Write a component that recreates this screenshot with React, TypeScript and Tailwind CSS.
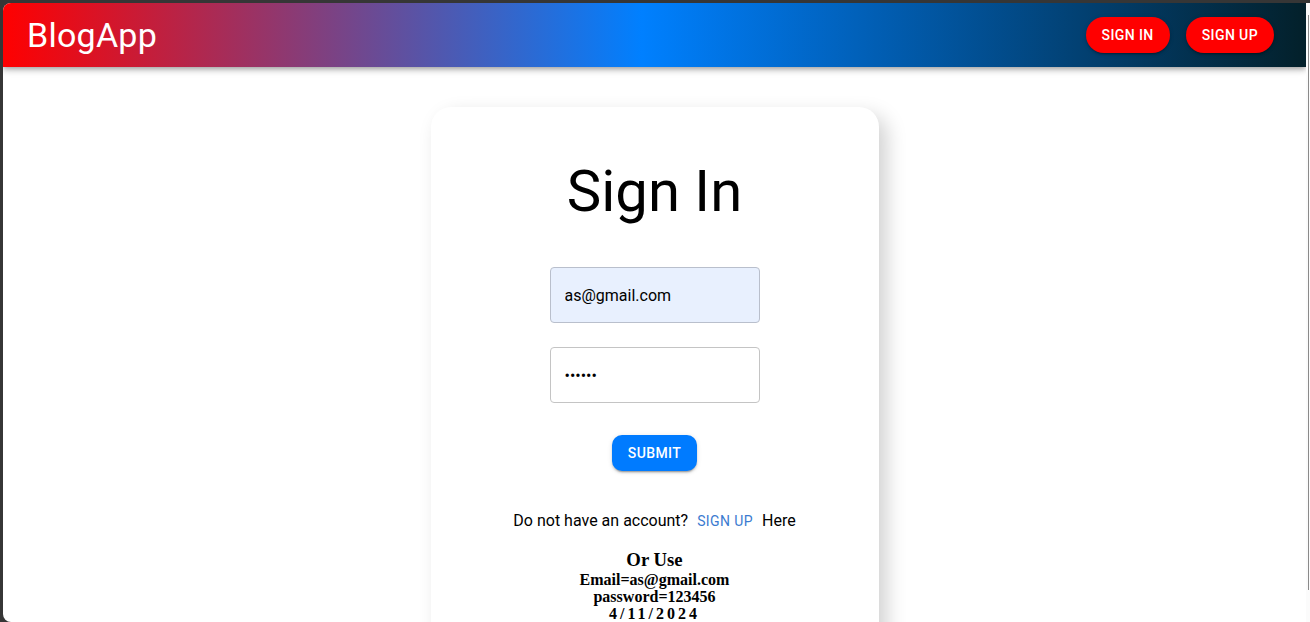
import React from "react";

export default function App() {
  return (
    <div
      className="w-[1310px] h-[622px] bg-[#363636] pt-[3px] pl-[3px] overflow-hidden"
      style={{ fontFamily: "Roboto, 'Noto Sans', sans-serif" }}
    >
      <div className="flex h-[619px]">
        <div className="w-[1303px] h-full bg-white rounded-tl-[8px] rounded-bl-[8px] overflow-hidden flex flex-col">
          {/* Navbar */}
          <header className="relative z-10 h-[64px] shrink-0 flex items-center justify-between pl-[24px] pr-[32px] bg-[linear-gradient(to_right,#ff0000_0%,#0080ff_49%,#03202a_100%)] shadow-[0px_2px_4px_-1px_rgba(0,0,0,0.2),0px_4px_5px_0px_rgba(0,0,0,0.14),0px_1px_10px_0px_rgba(0,0,0,0.12)]">
            <div className="text-white text-[34px] leading-[40px] font-normal tracking-[0.25px]">BlogApp</div>
            <div className="flex items-center gap-4">
              <button className="h-[36px] px-[16px] rounded-full bg-[#ff0000] text-white text-[14px] font-medium uppercase tracking-[0.4px] shadow-[0px_3px_1px_-2px_rgba(0,0,0,0.2),0px_2px_2px_0px_rgba(0,0,0,0.14),0px_1px_5px_0px_rgba(0,0,0,0.12)]">
                Sign In
              </button>
              <button className="h-[36px] px-[16px] rounded-full bg-[#ff0000] text-white text-[14px] font-medium uppercase tracking-[0.4px] shadow-[0px_3px_1px_-2px_rgba(0,0,0,0.2),0px_2px_2px_0px_rgba(0,0,0,0.14),0px_1px_5px_0px_rgba(0,0,0,0.12)]">
                Sign Up
              </button>
            </div>
          </header>

          {/* Main */}
          <main className="flex justify-center pt-[40px]">
            <div className="w-[448px] h-[600px] shrink-0 bg-white rounded-[20px] shadow-[8px_8px_20px_rgba(0,0,0,0.18)] flex flex-col items-center pt-[49px]">
              <h2 className="text-[58px] leading-[71px] font-normal text-black">Sign In</h2>

              <div className="mt-[40px] flex flex-col gap-[24px]">
                <input
                  readOnly
                  value="as@gmail.com"
                  className="w-[210px] h-[56px] px-[14px] rounded-[4px] border border-[#b9bfcc] bg-[#e8f0fe] text-[16px] text-black outline-none"
                  style={{ fontFamily: "Roboto, sans-serif" }}
                />
                <input
                  readOnly
                  type="password"
                  value="123456"
                  className="w-[210px] h-[56px] px-[14px] rounded-[4px] border border-[#c4c4c4] bg-white text-[16px] text-black outline-none"
                  style={{ fontFamily: "Roboto, sans-serif" }}
                />
              </div>

              <button className="mt-[32px] h-[36px] px-[16px] rounded-[10px] bg-[#007bff] text-white text-[14px] font-medium uppercase tracking-[0.4px] shadow-[0px_3px_1px_-2px_rgba(0,0,0,0.2),0px_2px_2px_0px_rgba(0,0,0,0.14),0px_1px_5px_0px_rgba(0,0,0,0.12)]">
                Submit
              </button>

              <div className="mt-[38px] h-[24px] flex items-center text-[16px] leading-[24px] text-black">
                <span>Do not have an account?</span>
                <span className="mx-[9px] text-[14px] text-[#3b7bd0] uppercase tracking-[0.4px]">Sign Up</span>
                <span>Here</span>
              </div>

              <div
                className="mt-[16px] flex flex-col items-center text-black font-bold"
                style={{ fontFamily: "'Liberation Serif', 'Times New Roman', serif" }}
              >
                <div className="text-[18.72px] leading-[22px]">Or Use</div>
                <div className="text-[16px] leading-[17px]">Email=as@gmail.com</div>
                <div className="text-[16px] leading-[17px]">password=123456</div>
                <div className="text-[16px] leading-[17px] tracking-[3px]">4/11/2024</div>
              </div>
            </div>
          </main>
        </div>
        <div className="relative w-[4px] h-full bg-[#fbfbfb]">
          <div className="absolute left-[2px] top-[12px] w-[1px] h-[575px] bg-[#8a8a8a]" />
        </div>
      </div>
    </div>
  );
}
